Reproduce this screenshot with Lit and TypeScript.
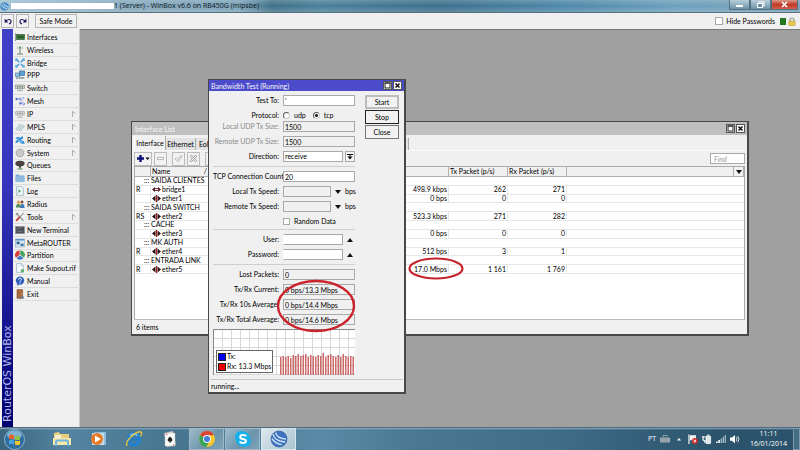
import { LitElement, html, css, svg, nothing } from "lit";
import { customElement } from "lit/decorators.js";

const icon = (body: unknown, cls = "ico", box = "0 0 10 10") =>
  html`<svg class=${cls} viewBox=${box} aria-hidden="true">${body}</svg>`;

const I = {
  interfaces: svg`<path d="M.5 1v8" stroke="#999"/><rect x="1.5" y="2.5" width="8" height="5" fill="#3c7a3c" stroke="#245224" stroke-width=".6"/><path d="M3 5h1.4M5.2 5h1.4M7.3 5h1" stroke="#16341a" stroke-width="1.6"/>`,
  wireless: svg`<path d="M5 3v5.6M2 9h6" stroke="#6d806d" fill="none"/><path d="M3 1.4q-1 1.4 0 2.6M7 1.4q1 1.4 0 2.6" stroke="#8cab8c" fill="none" stroke-width=".8"/><circle cx="5" cy="2.6" r="1" fill="#4c8b50"/>`,
  bridge: svg`<path d="M1 1l3 3M9 1L6 4M1 9l3-3M9 9L6 6" stroke="#3d92cf" stroke-width="1.6"/><path d="M.2.6h2.6v2.4H.2zM7.2.6h2.6v2.4H7.2zM.2 7h2.6v2.4H.2zM7.2 7h2.6v2.4H7.2z" fill="#5eaee2"/><circle cx="5" cy="5" r="1.6" fill="#bfe2f6"/>`,
  ppp: svg`<rect x=".4" y="3" width="4.4" height="3.6" fill="#8fc3e6" stroke="#44759c" stroke-width=".6"/><rect x="4.6" y="1" width="5" height="4.4" fill="#5aa0d4" stroke="#2f5f88" stroke-width=".6"/><path d="M4 7h5.4v2H3z" fill="#9aa7b2"/><path d="M1 8h2" stroke="#567"/>`,
  sw: svg`<rect x=".6" y="2" width="8.8" height="3.6" fill="#cfd6cf" stroke="#7b877b" stroke-width=".6"/><path d="M2 3.8h1.2M4.4 3.8h1.2M6.8 3.8H8" stroke="#3d5d3d" stroke-width="1.2"/><path d="M2.6 6v1.6h4.8V6M5 6v2.6" stroke="#9aa59a" stroke-width=".7" fill="none"/>`,
  mesh: svg`<path d="M2.4 3h4M6.8 3v4.6H8.6" stroke="#8a9ad8" stroke-width=".7" fill="none"/><circle cx="1.6" cy="3" r="1.2" fill="#5b70cc"/><circle cx="5" cy="3" r="1" fill="#fff" stroke="#5b70cc" stroke-width=".7"/><circle cx="8.4" cy="2" r="1" fill="#8fb0ee"/><circle cx="5.2" cy="7.4" r="1.2" fill="#5b70cc"/><circle cx="8.6" cy="7.8" r="1.1" fill="#fff" stroke="#5b70cc" stroke-width=".7"/>`,
  ip: svg`<rect x=".6" y="2.4" width="8.8" height="3.8" rx=".6" fill="#d8d8d8" stroke="#999" stroke-width=".6"/><path d="M2 4.3h1.4M4.3 4.3h1.4M6.6 4.3H8" stroke="#777" stroke-width="1.1"/><path d="M5 6.4v1.8M2 8.4h6" stroke="#aaa" stroke-width=".8"/>`,
  mpls: svg`<path d="M.8 7.2L5 2.2l1.4 1-4.2 5zM4 8.2l4.2-5 1.2 1-4 4.8z" fill="#d6e7ee" stroke="#88a6b4" stroke-width=".6"/>`,
  routing: svg`<path d="M.4 3l3-1.6v1h2L8 1v2.6L5.8 5l3.4 1.6L9.6 9 6 8.6 4 6.6l-3.4 2L.6 6l2-1.4z" fill="#3993d6"/><path d="M2 4.4l5 3" stroke="#bfe1f7" stroke-width=".7"/>`,
  system: svg`<circle cx="5" cy="5" r="3.6" fill="#d4d4d4" stroke="#9b9b9b" stroke-width=".8"/><circle cx="5" cy="5" r="4.3" fill="none" stroke="#a6a6a6" stroke-width=".8" stroke-dasharray="1.1 1.1"/><circle cx="5" cy="5" r="1.3" fill="#efefef" stroke="#999" stroke-width=".6"/>`,
  queues: svg`<ellipse cx="5" cy="3.6" rx="4.6" ry="2.8" fill="#3b3f3f"/><path d="M1.4 3.2h7" stroke="#7a4a44" stroke-width=".8"/><path d="M5 6v2.4" stroke="#55463c" stroke-width="1.6"/><path d="M2.4 9h5.2" stroke="#5b8f5b"/>`,
  files: svg`<path d="M.6 1.6h3.2l.8 1h4.8v6.2H.6z" fill="#7aa9d2"/><path d="M.6 3.4h8.8v5.4H.6z" fill="#8fbce0"/>`,
  log: svg`<path d="M1.6.6h5l1.8 1.8v7H1.6z" fill="#eef5f8" stroke="#8ba9b8" stroke-width=".7"/><path d="M3.4 3.2l2.8 1.9-2.8 1.9z" fill="#5da86d"/>`,
  radius: svg`<circle cx="3.4" cy="3" r="1.6" fill="#dd9b55"/><path d="M.8 8.6q.2-3.8 2.8-3.8T6 8.6z" fill="#4b8f57"/><circle cx="7" cy="3" r="1.5" fill="#7b4c2c"/><path d="M5 9q.2-4 2.4-4t2.2 4z" fill="#3e79c0"/><circle cx="5" cy="5.4" r="1" fill="#e7b94e"/>`,
  tools: svg`<path d="M1.4 1.2l7 7.6" stroke="#999" stroke-width="1.4"/><path d="M8.8 1L4.4 5.4" stroke="#777"/><path d="M4.6 5.2L1.2 8.8" stroke="#c43a30" stroke-width="1.8"/><path d="M.6 2.6q2 1 2-2" stroke="#888" fill="none"/>`,
  term: svg`<rect x=".6" y="1.6" width="8.8" height="7" fill="#4a4f55" stroke="#8b9095" stroke-width=".8"/><path d="M1.6 4l5-1.6M1.6 6.2h6" stroke="#858c94" stroke-width=".7"/>`,
  meta: svg`<rect x=".6" y="1" width="8.8" height="8" fill="#dbe9f4" stroke="#8aa6bf" stroke-width=".6"/><path d="M.6 1.8h8.8" stroke="#4c8bc6" stroke-width="1.4"/><rect x="1.6" y="3.6" width="3" height="2.6" fill="#2f5d8c"/><rect x="5.6" y="5.6" width="3" height="2.4" fill="#4277ab"/>`,
  part: svg`<path d="M4.6 5V.6A4.4 4.4 0 0 0 1 7.8z" fill="#d9403c"/><path d="M5.2 4.8V.4A4.4 4.4 0 0 1 9 7.4z" fill="#46a45a"/><path d="M5 5.4l3.6 2.6A4.4 4.4 0 0 1 1.6 8.2z" fill="#3d78c4"/>`,
  supout: svg`<path d="M1.6.6h4.8l2 2v6.8H1.6z" fill="#f2f8fa" stroke="#8fb3c4" stroke-width=".7"/><path d="M6.4.6v2h2" fill="#cfe2ea" stroke="#8fb3c4" stroke-width=".6"/><circle cx="7.4" cy="7.8" r="1.7" fill="#62ae74"/>`,
  manual: svg`<circle cx="5" cy="4.6" r="4.2" fill="#2f5fb8"/><path d="M2.4 7.6L2 9.8l2.4-1.4z" fill="#2f5fb8"/><path d="M3.6 3.6q0-1.4 1.4-1.4t1.4 1.2q0 .8-.8 1.2-.6.3-.6 1" stroke="#fff" fill="none" stroke-width=".9"/><circle cx="5" cy="6.8" r=".6" fill="#fff"/>`,
  exit: svg`<path d="M2 .6h5.6v8.8H2z" fill="#a9693c" stroke="#7b4a28" stroke-width=".6"/><circle cx="6.3" cy="5" r=".6" fill="#f0d080"/><path d="M5.6 7.6h3.4v1.8H5.6z" fill="#5d86a5"/>`,
};

const MENU: [string, unknown, boolean?][] = [
  ["Interfaces", I.interfaces], ["Wireless", I.wireless], ["Bridge", I.bridge], ["PPP", I.ppp],
  ["Switch", I.sw], ["Mesh", I.mesh], ["IP", I.ip, true], ["MPLS", I.mpls, true],
  ["Routing", I.routing, true], ["System", I.system, true], ["Queues", I.queues], ["Files", I.files],
  ["Log", I.log], ["Radius", I.radius], ["Tools", I.tools, true], ["New Terminal", I.term],
  ["MetaROUTER", I.meta], ["Partition", I.part], ["Make Supout.rif", I.supout], ["Manual", I.manual],
  ["Exit", I.exit],
];

type Row = { note: string } | { flag: string; name: string; rx: string; txp: string; rxp: string };
const ROWS: Row[] = [
  { note: "SAIDA CLIENTES" },
  { flag: "R", name: "bridge1", rx: "498.9 kbps", txp: "262", rxp: "271" },
  { flag: "", name: "ether1", rx: "0 bps", txp: "0", rxp: "0" },
  { note: "SAIDA SWITCH" },
  { flag: "RS", name: "ether2", rx: "523.3 kbps", txp: "271", rxp: "282" },
  { note: "CACHE" },
  { flag: "", name: "ether3", rx: "0 bps", txp: "0", rxp: "0" },
  { note: "MK AUTH" },
  { flag: "R", name: "ether4", rx: "512 bps", txp: "3", rxp: "1" },
  { note: "ENTRADA LINK" },
  { flag: "R", name: "ether5", rx: "17.0 Mbps", txp: "1 161", rxp: "1 769" },
];

const TRAFFIC = [18, 19, 18, 19, 17, 20, 19, 21, 19, 20, 21, 18, 20, 19, 18, 20, 19, 22, 18, 20, 21, 19, 18, 20, 18, 21, 19, 18, 19, 18];

const base = css`
  * { box-sizing: border-box; }
  button, input, select {
    font: inherit; color: inherit; margin: 0; padding: 0;
    border: 1px solid #a9a9a9; border-radius: 0; background: #fff; appearance: none; min-width: 0;
  }
  button { display: flex; align-items: center; justify-content: center; background: #f2f2f2; white-space: nowrap; }
  svg { display: block; flex: none; overflow: visible; }
  ul { list-style: none; margin: 0; padding: 0; }
`;

@customElement("side-menu")
export class SideMenu extends LitElement {
  static styles = [base, css`
    :host { display: flex; background: #f0f0f0; border-right: 1px solid #c8c8c8; padding-left: 2px; }
    .strip {
      width: 11px; background: linear-gradient(#000070, #08087c 10%, #3434bc 60%, #4040c8);
      color: #b4b8e8; font: 11px/11px "DejaVu Sans", sans-serif;
      writing-mode: vertical-rl; transform: rotate(180deg); padding-top: 5px; white-space: nowrap;
    }
    .list { flex: 1; min-width: 0; height: 270px; margin-top: 2px; display: grid; grid-auto-rows: 1fr; }
    .row { border-bottom: 1px solid #dcdcdc; display: flex; margin-left: 1px; }
    .link { flex: 1; display: flex; align-items: center; gap: 2px; padding: 0 5px 0 1px; color: #000; text-decoration: none; line-height: 10px; white-space: nowrap; }
    .ico { width: 10px; height: 10px; }
    .label { flex: 1; }
    .more { width: 4px; height: 6px; }
  `];
  render() {
    return html`
      <div class="strip">RouterOS WinBox</div>
      <ul class="list">
        ${MENU.map(([name, art, more]) => html`
          <li class="row"><a class="link" href="#">${icon(art)}<span class="label">${name}</span>
            ${more ? icon(svg`<path d="M.5 6V.5L3.5 2.5" fill="none" stroke="#999" stroke-width=".8"/>`, "more", "0 0 4 6") : nothing}</a></li>`)}
      </ul>`;
  }
}

const sysButtons = html`
  <button class="sys" aria-label="Restore">${icon(svg`<rect x="1" y="1" width="5" height="5" fill="none" stroke="#222"/><path d="M.5 1h6" stroke="#222"/>`, "sysico", "0 0 7 7")}</button>
  <button class="sys" aria-label="Close">${icon(svg`<path d="M1.5 1.5l4 4M5.5 1.5l-4 4" stroke="#111" stroke-width="1.5"/>`, "sysico", "0 0 7 7")}</button>`;

const frame = css`
  .bar { display: flex; align-items: center; gap: 1px; padding: 0 3px; color: #f8f8f8; }
  .title { flex: 1; white-space: nowrap; }
  .sys { width: 9px; height: 9px; background: #fff; border-color: #555; }
  .sysico { width: 7px; height: 7px; }
`;

@customElement("interface-list")
export class InterfaceList extends LitElement {
  static styles = [base, frame, css`
    :host { display: flex; flex-direction: column; background: #f0f0f0; border: 1px solid #484848; border-right-width: 2px; border-bottom-width: 2px; }
    .bar { height: 13px; background: #bfbfbf; padding: 0 2px 0 3px; }
    .tabs { display: flex; align-items: flex-end; height: 15px; padding-left: 2px; }
    .tab { height: 12px; width: 30px; border: 0; border-right: 1px solid #aaa; background: #e2e2e2; }
    .tab.on { height: 14px; width: 32px; background: #f0f0f0; border-left: 1px solid #fff; }
    .tab.rest { flex: 0 0 213px; justify-content: flex-start; padding-left: 3px; }
    .tools { display: flex; align-items: center; height: 16px; padding: 0 2px; gap: 2px; border-top: 1px solid #fafafa; }
    .tool { width: 13px; height: 14px; border-color: #bbb; }
    .tool.add { width: 18px; }
    .tool.gap { margin-left: 3px; }
    .glyph { width: 9px; height: 9px; }
    .addico { width: 14px; height: 9px; }
    .find { width: 35px; height: 11px; margin-left: auto; padding-left: 3px; }
    .find::placeholder { color: #999; font-style: italic; opacity: 1; }
    .sheet { flex: 1; margin: 0 2px; background: #fff; border: 1px solid #aaa; border-bottom: 0; }
    table { border-collapse: separate; border-spacing: 0; table-layout: fixed; width: 100%; height: 107px; line-height: 7px; }
    .c0 { width: 16px; } .c1 { width: 98px; } .c2 { width: 200px; } .c3 { width: 59px; } .c4 { width: 59px; } .c6 { width: 10px; }
    th, td { padding: 0 1px; white-space: nowrap; border-bottom: 1px solid #e6e6e6; border-right: 1px solid #e6e6e6; text-align: right; }
    th { height: 10px; font-weight: normal; text-align: left; background: #f0f0f0; border-color: #b0b0b0; }
    .note { text-align: left; padding-left: 9px; border-right: 0; }
    .wide { border-right: 0; }
    .flag { text-align: left; }
    .name { display: flex; align-items: center; gap: 1px; }
    .sorted { display: flex; justify-content: space-between; padding-right: 40px; }
    .eth { width: 9px; height: 7px; }
    .menu { width: 8px; height: 8px; border: 0; }
    .down { width: 6px; height: 4px; }
    .foot { height: 15px; line-height: 15px; padding-left: 2px; border-top: 1px solid #bbb; margin: 0 2px; }
  `];
  render() {
    return html`
      <div class="bar"><span class="title">Interface List</span>${sysButtons}</div>
      <div class="tabs">
        <button class="tab on">Interface</button><button class="tab">Ethernet</button>
        <button class="tab rest">EoIP</button>
      </div>
      <div class="tools">
        <button class="tool add" aria-label="Add">${icon(svg`<path d="M4.5 1v7M1 4.5h7" stroke="#10107a" stroke-width="2.4"/><path d="M9.4 3.4h4.4L11.6 6z" fill="#111"/>`, "addico", "0 0 14 9")}</button>
        <button class="tool" aria-label="Remove">${icon(svg`<rect x="1.5" y="3.5" width="6" height="2" fill="#fff" stroke="#aaa" stroke-width=".8"/>`, "glyph", "0 0 9 9")}</button>
        <button class="tool gap" aria-label="Enable">${icon(svg`<path d="M1 5l1.4-1L4 5.6 7 1.4l1 .8L4.2 7.8z" fill="#fff" stroke="#aaa" stroke-width=".8"/>`, "glyph", "0 0 9 9")}</button>
        <button class="tool" aria-label="Disable">${icon(svg`<path d="M1.4 1.4l6.2 6.2M7.6 1.4L1.4 7.6" stroke="#aaa" stroke-width="2.4"/><path d="M1.8 1.8l5.4 5.4M7.2 1.8L1.8 7.2" stroke="#fff"/>`, "glyph", "0 0 9 9")}</button>
        <button class="tool gap" aria-label="Comment"></button>
        <input class="find" placeholder="Find" aria-label="Find" />
      </div>
      <div class="sheet">
        <table>
          <colgroup><col class="c0" /><col class="c1" /><col class="c2" /><col class="c3" /><col class="c4" /><col /><col class="c6" /></colgroup>
          <thead><tr><th></th><th><span class="sorted">Name<span>/</span></span></th><th></th><th>Tx Packet (p/s)</th><th>Rx Packet (p/s)</th><th></th>
            <th><button class="menu" aria-label="Columns">${icon(svg`<path d="M0 0h6L3 4z" fill="#111"/>`, "down", "0 0 6 4")}</button></th></tr></thead>
          <tbody>
            ${ROWS.map((r) => "note" in r
              ? html`<tr><td class="note" colspan="7">::: ${r.note}</td></tr>`
              : html`<tr><td class="flag">${r.flag}</td>
                  <td><span class="name">${icon(r.name === "bridge1"
                    ? svg`<path d="M0 3.5L3 1v5zM9 3.5L6 1v5z" fill="#5a1820"/><path d="M2 2.5h5M2 4.5h5" stroke="#5a1820" stroke-width=".9"/>`
                    : svg`<path d="M0 3.5L3.5.5v6zM9 3.5L5.5.5v6z" fill="#2a1216"/><path d="M4.5 0v7" stroke="#a02020" stroke-width="1.2"/>`, "eth", "0 0 9 7")}${r.name}</span></td>
                  <td>${r.rx}</td><td>${r.txp}</td><td>${r.rxp}</td><td class="wide" colspan="2"></td></tr>`)}
          </tbody>
        </table>
      </div>
      <div class="foot">6 items</div>`;
  }
}

@customElement("bandwidth-test")
export class BandwidthTest extends LitElement {
  static styles = [base, frame, css`
    :host { display: flex; flex-direction: column; background: #f0f0f0; border: 1px solid #484848; border-right-width: 2px; border-bottom-width: 2px; }
    .bar { height: 12px; background: #4b4bcb; padding: 0 2px; }
    .body { display: flex; gap: 10px; padding: 4px 5px 4px 4px; }
    .form { flex: 1; min-width: 0; display: flex; flex-direction: column; gap: 4px; }
    .field { display: grid; grid-template-columns: 66px 1fr; gap: 4px; align-items: center; height: 11px; line-height: 9px; white-space: nowrap; }
    .field.choice { height: 7px; }
    .field.tick { height: 9px; }
    .name { text-align: right; }
    .dim { color: #8a8a8a; }
    .cell { display: flex; align-items: center; gap: 2px; height: 11px; }
    .box { flex: 1; width: 100%; height: 11px; padding-left: 1px; line-height: 9px; }
    .box.off { background: #f0f0f0; }
    .box.short { flex: 0 0 48px; }
    .box.masked { border-left-color: #fff; }
    .drop { width: 10px; height: 11px; }
    .bare { width: 10px; height: 11px; border: 0; background: none; }
    .glyph { width: 6px; height: 6px; }
    .radio { width: 7px; height: 7px; border-radius: 50%; border-color: #555 #ccc #ccc #555; display: grid; place-items: center; }
    .radio:checked::after { content: ""; width: 3px; height: 3px; border-radius: 50%; background: #111; }
    .opt { display: flex; align-items: center; gap: 4px; margin-right: 5px; }
    .check { width: 7px; height: 7px; margin-right: 2px; }
    .rule { height: 1px; background: #cfcfcf; }
    .acts { width: 34px; display: flex; flex-direction: column; gap: 1px; }
    .act { height: 14px; border-color: #777; }
    .act.start { border: 2px solid #bdbdbd; }
    .act.stop { border-color: #222; }
    .chart {
      height: 46px; border: 1px solid #888; border-right: 0; border-bottom: 0;
      background: repeating-linear-gradient(90deg, transparent 0 8px, #d8d8d8 8px 9px), repeating-linear-gradient(transparent 0 8px, #d8d8d8 8px 9px), #fff;
      display: flex; justify-content: space-between; align-items: flex-end;
    }
    .bars { width: 75px; height: 22px; }
    .legend { width: 57px; height: 23px; margin: 0 0 2px 2px; background: #fff; border: 1px solid #666; display: flex; flex-direction: column; justify-content: center; gap: 1px; padding-left: 1px; }
    .key { display: flex; align-items: center; gap: 1px; line-height: 9px; white-space: nowrap; }
    .sw { flex: none; width: 8px; height: 8px; border: 1px solid #222; }
    .tx { background: #0000f0; } .rx { background: #f00000; }
    .foot { flex: 1; margin: 0 1px; border-top: 1px solid #c8c8c8; line-height: 12px; padding-left: 1px; }
    .ring { position: absolute; left: 68px; top: 199px; width: 80px; height: 54px; pointer-events: none; }
  `];
  private text(id: string, label: string, value: string, off = false, dim = false) {
    return html`<div class="field"><label class="name ${dim ? "dim" : ""}" for=${id}>${label}</label>
      <div class="cell"><input id=${id} class="box ${off ? "off" : ""}" .value=${value} ?readonly=${off} /></div></div>`;
  }
  private speed(id: string, label: string) {
    return html`<div class="field"><label class="name" for=${id}>${label}</label>
      <div class="cell"><input id=${id} class="box off short" />
        <button class="bare" aria-label="Show">${icon(svg`<path d="M0 1h6L3 5z" fill="#111"/>`, "glyph", "0 0 6 6")}</button><span>bps</span></div></div>`;
  }
  private login(id: string, label: string) {
    return html`<div class="field"><label class="name" for=${id}>${label}</label>
      <div class="cell"><input id=${id} class="box masked" />
        <button class="bare" aria-label="Hide">${icon(svg`<path d="M0 5h6L3 1z" fill="#111"/>`, "glyph", "0 0 6 6")}</button></div></div>`;
  }
  render() {
    return html`
      <div class="bar"><span class="title">Bandwidth Test (Running)</span>${sysButtons}</div>
      <div class="body">
        <div class="form">
          ${this.text("to", "Test To:", "'")}
          <div class="field choice"><span class="name">Protocol:</span><div class="cell">
            <label class="opt"><input class="radio" type="radio" name="p" />udp</label>
            <label class="opt"><input class="radio" type="radio" name="p" checked />tcp</label></div></div>
          ${this.text("lu", "Local UDP Tx Size:", "1500", true, true)}
          ${this.text("ru", "Remote UDP Tx Size:", "1500", true, true)}
          <div class="field"><label class="name" for="dir">Direction:</label><div class="cell">
            <select id="dir" class="box"><option>receive</option><option>send</option><option>both</option></select>
            <button class="drop" aria-label="Choose">${icon(svg`<path d="M0 .5h6M3 1v2" stroke="#111"/><path d="M.5 2.5h5L3 5.5z" fill="#111"/>`, "glyph", "0 0 6 6")}</button></div></div>
          <div class="rule"></div>
          ${this.text("cc", "TCP Connection Count:", "20")}
          ${this.speed("lt", "Local Tx Speed:")}
          ${this.speed("rt", "Remote Tx Speed:")}
          <div class="field tick"><span></span><div class="cell"><input class="check" id="rd" type="checkbox" /><label for="rd">Random Data</label></div></div>
          <div class="rule"></div>
          ${this.login("us", "User:")}
          ${this.login("pw", "Password:")}
          <div class="rule"></div>
          ${this.text("lp", "Lost Packets:", "0", true)}
          ${this.text("cu", "Tx/Rx Current:", "0 bps/13.3 Mbps", true)}
          ${this.text("av", "Tx/Rx 10s Average:", "0 bps/14.4 Mbps", true)}
          ${this.text("ta", "Tx/Rx Total Average:", "0 bps/14.6 Mbps", true)}
          <div class="chart">
            <div class="legend">
              <div class="key"><span class="sw tx"></span>Tx:</div>
              <div class="key"><span class="sw rx"></span>Rx: 13.3 Mbps</div>
            </div>
            <svg class="bars" viewBox="0 0 75 22" aria-hidden="true">
              ${TRAFFIC.map((v, i) => svg`<rect x=${i * 2.5} y=${22 - v} width="1.5" height=${v} fill="#cc6a6a"/>`)}
            </svg>
          </div>
        </div>
        <div class="acts">
          <button class="act start">Start</button><button class="act stop">Stop</button><button class="act">Close</button>
        </div>
      </div>
      <div class="foot">running...</div>
      <svg class="ring" viewBox="0 0 80 54" aria-hidden="true"><ellipse cx="39" cy="27" rx="38" ry="25" fill="none" stroke="#c9232c" stroke-width="2.4"/></svg>`;
  }
}

@customElement("task-bar")
export class TaskBar extends LitElement {
  static styles = [base, css`
    :host {
      display: flex; align-items: center; height: 23px; color: #fff; border-top: 1px solid #51697a;
      background: linear-gradient(#8fb0c3, transparent 2px), linear-gradient(90deg, #39657f, #5484a0 8%, #47758f 22%, #5a8aa5 40%, #4a7893 52%, #3f6c87 70%, #2b536c 90%, #2b536c);
    }
    .orb { width: 29px; height: 22px; border: 0; background: none; }
    .orbico { width: 21px; height: 21px; }
    .grip { width: 5px; height: 18px; margin: 0 4px 0 6px; background: radial-gradient(#24465b 0 40%, transparent 50%) 0 0 / 2px 2px; }
    .app { width: 36px; height: 22px; border: 0; background: none; }
    .app.run { width: 35px; margin-left: 1px; border: 1px solid #9fb9c8; background: linear-gradient(135deg, #9dbaca, #6c93aa 60%, #7fa5ba); }
    .app.live { background: linear-gradient(135deg, #dce8ee, #a9c3d1); border-color: #d8e6ee; }
    .art { width: 18px; height: 18px; }
    .tray { margin-left: auto; display: flex; align-items: center; gap: 4px; font: 7px/10px "Open Sans", sans-serif; }
    .mini { width: 10px; height: 10px; }
    .clock { width: 49px; text-align: center; }
    .peek { width: 7px; height: 100%; border: 1px solid #7d9bad; background: #436c85; }
  `];
  render() {
    const a = (label: string, body: unknown, cls = "") =>
      html`<button class="app ${cls}" aria-label=${label}>${icon(body, "art", "0 0 18 18")}</button>`;
    return html`
      <button class="orb" aria-label="Start">${icon(svg`
        <circle cx="10.5" cy="10.5" r="10" fill="#2f6d9c" stroke="#9cc3dc" stroke-width=".8"/><ellipse cx="10.5" cy="6" rx="7.4" ry="4.6" fill="#7fb2d3"/>
        <path d="M5 6.4q2.6-1.6 5 0v4q-2.4-1.4-5 0z" fill="#e8622c"/><path d="M11 6.4q2.4 1.4 5 0v4q-2.6 1.4-5 0z" fill="#8cc544"/>
        <path d="M5 11.4q2.6-1.4 5 0v4q-2.4-1.4-5 0z" fill="#45a6e0"/><path d="M11 11.4q2.4 1.4 5 0v4q-2.6 1.4-5 0z" fill="#f6c62e"/>`, "orbico", "0 0 21 21")}</button>
      <div class="grip"></div>
      ${a("Explorer", svg`<path d="M1 3l5-1 1 2h9v11H1z" fill="#e9cf7c"/><path d="M2 5h6v3H2z" fill="#fff" opacity=".7"/><path d="M0 8h18v7H0z" fill="#f7e8a8"/><path d="M3 16v-4q0-1.4 1.4-1.4h9.2q1.4 0 1.4 1.4v4" fill="none" stroke="#6fb4de" stroke-width="2"/>`)}
      ${a("Media Player", svg`<rect x="5" y="2" width="12" height="13" rx="1" fill="#8fbfe0"/><rect x="3" y="3" width="12" height="12" fill="#c3deef"/><circle cx="8" cy="9" r="6" fill="#e87a24"/><path d="M6 5.6l6 3.4-6 3.4z" fill="#fff"/>`)}
      ${a("Internet Explorer", svg`<circle cx="9" cy="9.4" r="5.4" fill="#4a7b97" stroke="#2080d0" stroke-width="3.4"/><path d="M5.6 9.4h8.8" stroke="#2080d0" stroke-width="2.4"/><path d="M5 5.4q4-2.6 7.6 0" fill="none" stroke="#8fd0f8" stroke-width="1.2"/><path d="M2 16Q0 12 7 6T16.6 2.6Q17.200 4 15.400 6.400" fill="none" stroke="#e8c53c" stroke-width="1.4"/>`)}
      ${a("Solitaire", svg`<path d="M3.4 3.6L11.6 1l3 13.6L6 17z" fill="#e4e4e4" stroke="#aaa" stroke-width=".6"/><path d="M4 3h10v13H4z" fill="#fafafa" stroke="#bbb" stroke-width=".5"/><path d="M9 6.4q3.6 3 1.8 4.8-.9.5-1.4-.2l.6 1.6H8l.6-1.6q-.6.7-1.4.2Q5.4 9.4 9 6.4z" fill="#222"/><path d="M5 4.2h1.4M12 15h1.2" stroke="#c33"/>`)}
      ${a("Chrome", svg`<circle cx="9" cy="9" r="8" fill="#f2c62f"/><path d="M9 9L2.1 5A8 8 0 0 0 8.2 17L12 10.5z" fill="#3ba45a"/><path d="M9 9L2.1 5A8 8 0 0 1 16 5.2H9z" fill="#dc4437"/><circle cx="9" cy="9" r="3.9" fill="#fff"/><circle cx="9" cy="9" r="3" fill="#3f7fd8"/>`, "run")}
      ${a("Skype", svg`<rect x="1" y="1" width="12" height="12" rx="6" fill="#16b0ea"/><rect x="5" y="5" width="12" height="12" rx="6" fill="#16b0ea"/><circle cx="9" cy="9" r="7.4" fill="#16b0ea"/><path d="M12 6.4Q11.4 5 9 5 6.2 5 6.2 6.9 6.2 8.6 9 9t3 2.1Q12 13 9 13 6.4 13 5.8 11.4" fill="none" stroke="#fff" stroke-width="2"/>`, "run")}
      ${a("WinBox", svg`<circle cx="9" cy="9" r="8" fill="#3f74c0" stroke="#2a559a" stroke-width=".6"/><path d="M3 4q1 7 12 8M5.6 2.6q1 5.6 10.4 6.6M2 8.6q3 5 9.6 6" fill="none" stroke="#d9e8fa" stroke-width="1.3"/>`, "run live")}
      <div class="tray">
        <span>PT</span>
        ${icon(svg`<rect x="0" y="3.5" width="10" height="5" rx="1" fill="#a5b0b6"/><path d="M1 5h8M1 7h8" stroke="#68767e" stroke-width=".8" stroke-dasharray="1 .6"/><path d="M3 3V1.6h5" stroke="#a5b0b6" stroke-width=".8" fill="none"/>`, "mini")}
        ${icon(svg`<path d="M3 6.5h4L5 4z" fill="#fff"/>`, "mini")}
        ${icon(svg`<path d="M1 .6V10" stroke="#fff" stroke-width="1.2"/><path d="M2 1.2h6v5H2z" fill="#f2f2f2"/><circle cx="6.8" cy="7" r="2.9" fill="#d6302c"/><path d="M5.6 5.8L8 8.2M8 5.8L5.6 8.2" stroke="#fff" stroke-width=".9"/>`, "mini")}
        ${icon(svg`<rect x="4" y="2" width="4.6" height="7.6" rx=".6" fill="#dfe6ea" stroke="#fff" stroke-width=".8"/><path d="M1 2v3q0 1.6 2 1.6V9M0 3h3.6M5.4 1h2" stroke="#fff" stroke-width="1.1" fill="none"/>`, "mini")}
        ${icon(svg`<path d="M0 9h1.6V7.6H0zM2.3 9h1.6V6H2.3z" fill="#fff"/><path d="M4.6 9h1.6V4.4H4.6zM6.8 9h1.4V2.6H6.8zM8.8 9h1.2V1H8.8z" fill="#9fb4c1"/>`, "mini")}
        ${icon(svg`<path d="M0 3.6h2L5 1v8.4L2 6.8H0z" fill="#fff"/><path d="M6.2 3.2q1.4 2 0 4M7.8 2q2.2 3.2 0 6.4" stroke="#fff" stroke-width=".8" fill="none"/>`, "mini")}
        <div class="clock">11:11<br />16/01/2014</div>
      </div>
      <button class="peek" aria-label="Show desktop"></button>`;
  }
}

@customElement("app-root")
export class AppRoot extends LitElement {
  static styles = [base, css`
    :host { display: flex; flex-direction: column; height: 100vh; overflow: hidden; background: #f0f0f0; color: #000; font: 7px/10px Lato, "Liberation Sans", sans-serif; }
    .caption {
      height: 13px; display: flex; align-items: center; color: #101820; font: 7px/12px "Open Sans", sans-serif; padding-right: 2px;
      background: linear-gradient(#ffffff30, #ffffff00 50%, #ffffff30), linear-gradient(90deg, #9fc0d2, #86a9bd 15%, #7ba2b8 30%, #3f7089 34%, #4a8099 40%, #3c6f8c 55%, #4d87a8 70%, #6da0bd 85%, #7aa0b5);
      border-bottom: 1px solid #5a6f7c;
    }
    .logo { width: 9px; height: 9px; margin-right: 2px; }
    .masked { width: 103px; height: 6px; background: #fff; }
    .caption-text { flex: 1; white-space: nowrap; }
    .win { width: 21px; height: 10px; align-self: flex-start; border: 1px solid #52707f; border-top: 0; background: linear-gradient(#b8cfdb, #6d93a8); }
    .win.x { width: 27px; background: linear-gradient(#dc9a8c, #c03a26 50%, #d0604a); }
    .winico { width: 9px; height: 7px; }
    .toolbar { display: flex; align-items: center; height: 16px; padding: 0 4px 0 1px; gap: 2px; }
    .tb { width: 13px; height: 14px; border-color: #b4b4b4; }
    .tb.safe { width: 42px; margin-left: 4px; }
    .tbico { width: 8px; height: 8px; }
    .hide { margin-left: auto; display: flex; align-items: center; gap: 3px; margin-right: 3px; }
    .check { width: 8px; height: 8px; }
    .led { width: 6px; height: 7px; background: #23771f; }
    .lock { width: 8px; height: 9px; }
    .main { flex: 1; display: flex; min-height: 0; }
    .menu { flex: 0 0 80px; min-width: 0; }
    .desk { flex: 1; position: relative; overflow: hidden; background: #a0a0a0; border-top: 1px solid #777; }
    .list { position: absolute; left: 51px; top: 91px; width: 618px; height: 215px; }
    .test { position: absolute; left: 128px; top: 49px; width: 198px; height: 315px; }
    .ring { position: absolute; left: 328px; top: 227px; width: 56px; height: 23px; pointer-events: none; }
  `];
  render() {
    return html`
      <header class="caption">
        ${icon(svg`<circle cx="5" cy="5" r="4.6" fill="#4a8fca"/><path d="M2 3q1 4 6 4.6M4 1.6q.6 3 5 4" stroke="#fff" stroke-width=".8" fill="none"/>`, "logo")}
        <span class="masked"></span>
        <span class="caption-text">1 (Server) - WinBox v6.6 on RB450G (mipsbe)</span>
        <button class="win" aria-label="Minimize">${icon(svg`<path d="M1 5h7" stroke="#fff" stroke-width="2"/>`, "winico", "0 0 9 7")}</button>
        <button class="win" aria-label="Restore">${icon(svg`<rect x="3" y="1" width="5" height="4" fill="none" stroke="#fff"/><rect x="1.5" y="2.5" width="5" height="4" fill="#6d93a8" stroke="#fff"/>`, "winico", "0 0 9 7")}</button>
        <button class="win x" aria-label="Close">${icon(svg`<path d="M2 1l5 5M7 1L2 6" stroke="#fff" stroke-width="1.6"/>`, "winico", "0 0 9 7")}</button>
      </header>
      <div class="toolbar">
        <button class="tb" aria-label="Undo">${icon(svg`<path d="M2 4q4-3 5 0 .4 2-2 3" fill="none" stroke="#15155e" stroke-width="1.1"/><path d="M.6 1.6v3.8h3.6z" fill="#15155e"/>`, "tbico", "0 0 8 8")}</button>
        <button class="tb" aria-label="Redo">${icon(svg`<path d="M6 4Q2 1 1 4q-.4 2 2 3" fill="none" stroke="#15155e" stroke-width="1.1"/><path d="M7.4 1.6v3.8H3.8z" fill="#15155e"/>`, "tbico", "0 0 8 8")}</button>
        <button class="tb safe">Safe Mode</button>
        <label class="hide"><input class="check" type="checkbox" />Hide Passwords</label>
        <span class="led"></span>
        ${icon(svg`<path d="M2 4.5V3q0-2 2-2t2 2v1.5" fill="none" stroke="#999" stroke-width="1.1"/><rect x=".8" y="4" width="6.4" height="4.6" rx=".6" fill="#e8c84a" stroke="#b0932c" stroke-width=".5"/>`, "lock", "0 0 8 9")}
      </div>
      <div class="main">
        <side-menu class="menu"></side-menu>
        <main class="desk">
          <interface-list class="list"></interface-list>
          <bandwidth-test class="test"></bandwidth-test>
          <svg class="ring" viewBox="0 0 56 23" aria-hidden="true"><ellipse cx="28" cy="11.5" rx="26.5" ry="10" fill="none" stroke="#c9232c" stroke-width="2.2"/></svg>
        </main>
      </div>
      <task-bar></task-bar>`;
  }
}
